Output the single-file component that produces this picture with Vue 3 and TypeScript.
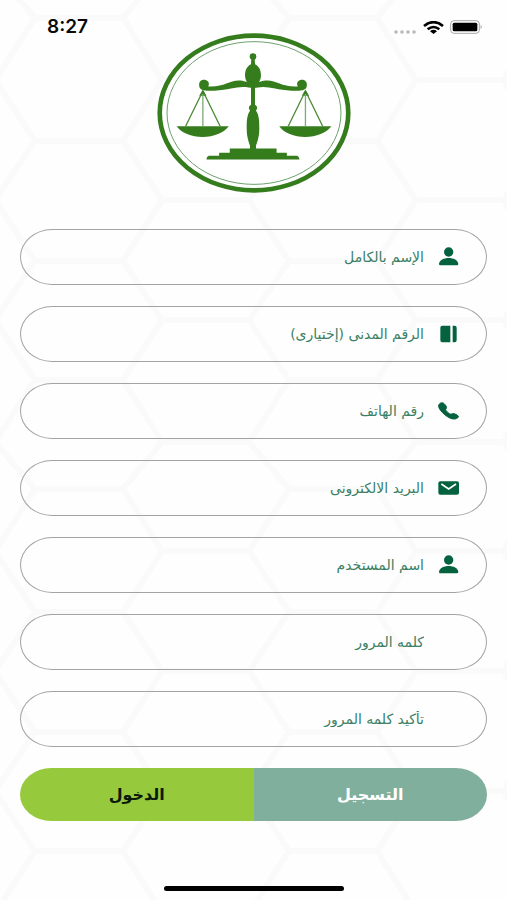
<script setup lang="ts">
import { ref } from 'vue'

type IconName = 'user' | 'card' | 'phone' | 'mail' | 'none'

interface Field {
  id: string
  type: string
  text: string
  icon: IconName
}

const fields: Field[] = [
  { id: 'full-name', type: 'text', text: 'الإسم بالكامل', icon: 'user' },
  { id: 'civil-id', type: 'text', text: 'الرقم المدنى (إختيارى)', icon: 'card' },
  { id: 'phone', type: 'tel', text: 'رقم الهاتف', icon: 'phone' },
  { id: 'email', type: 'email', text: 'البريد الالكترونى', icon: 'mail' },
  { id: 'username', type: 'text', text: 'اسم المستخدم', icon: 'user' },
  { id: 'password', type: 'password', text: 'كلمه المرور', icon: 'none' },
  { id: 'password-confirm', type: 'password', text: 'تأكيد كلمه المرور', icon: 'none' },
]

const values = ref<Record<string, string>>({})

// Honeycomb tile: flat edges of one column, and the corners halfway between them.
const edges = [0, 123, 243, 362, 471]
const corners = [62, 182, 302, 424]
const honeycomb = corners
  .map((mid, i) => `M0 ${mid} 40 ${edges[i]}H128L167 ${mid} 128 ${edges[i + 1]}H40ZM167 ${mid}H254`)
  .join('')
</script>

<template>
  <div class="page">
    <svg class="backdrop" aria-hidden="true">
      <defs>
        <pattern id="hex" x="-5" y="18" width="254" height="471" patternUnits="userSpaceOnUse">
          <path :d="honeycomb" />
        </pattern>
      </defs>
      <rect width="100%" height="100%" fill="url(#hex)" />
    </svg>

    <header class="status">
      <span class="time">8:27</span>
      <span class="indicators">
        <svg class="dots" viewBox="0 0 24 4" aria-hidden="true">
          <circle cx="3" cy="2" r="1.8" /><circle cx="9" cy="2" r="1.8" />
          <circle cx="15" cy="2" r="1.8" /><circle cx="21" cy="2" r="1.8" />
        </svg>
        <svg class="wifi" viewBox="0 0 63 39" aria-hidden="true">
          <path d="M3 15Q31.500 -8 60 15" />
          <path d="M14 25Q31.500 11 49 25" />
          <path class="solid" d="M31.500 39 21 30.500Q31.500 22 42 30.500Z" />
        </svg>
        <svg class="battery" viewBox="0 0 99 42" aria-hidden="true">
          <rect class="shell" x="2" y="2" width="86" height="38" rx="10" />
          <rect x="8" y="8" width="74" height="26" rx="5" />
          <path class="tip" d="M92 15Q98 21 92 27Z" />
        </svg>
      </span>
    </header>

    <main>
      <svg class="logo" viewBox="20 22 584 482" role="img" aria-label="ميزان">
        <ellipse class="ring" cx="312" cy="263" rx="284" ry="233" />
        <ellipse class="hairline" cx="312" cy="263" rx="262" ry="215" />
        <g class="ink">
          <circle cx="309" cy="93" r="10" />
          <path d="M304 98H314L315 116C328 122 333 135 333 150 333 162 328 171 320 175H298C290 171 285 162 285 150 285 135 290 122 303 116Z" />
          <path d="M309 171C330 171 335 165 352 165 382 165 398 186 444 183 438 172 446 163 457 163 469 163 474 174 470 186 468 195 445 197 425 196 385 194 362 185 340 185 325 185 320 188 309 188 298 188 293 185 278 185 256 185 233 194 193 196 173 197 150 195 148 186 144 174 149 163 161 163 172 163 180 172 174 183 220 186 236 165 266 165 283 165 288 171 309 171Z" />
          <path d="M303 184H315V238Q323 242 321 250L318 256C328 270 328 290 328 310 328 335 322 350 318 362V372H300V362C296 350 290 335 290 310 290 290 290 270 300 256L297 250Q295 242 303 238Z" />
          <path d="M239 370H380V383H411V392H442Q449 395 449 403H169Q168 395 176 392H207V383H239Z" />
          <path d="M79 303H236C222 323 190 335 157 335S92 323 79 303Z" />
          <path d="M388 303H545C531 323 499 335 466 335S401 323 388 303Z" />
          <path d="M158 192 169 211H147ZM467 192 478 211H456Z" />
        </g>
        <path class="cord" d="M154 205 106 303M162 205 210 303M463 205 415 303M471 205 519 303" />
        <path class="cord faint" d="M158 205V303M467 205V303" />
      </svg>

      <form dir="rtl" @submit.prevent>
        <label v-for="f in fields" :key="f.id" class="field" :for="f.id">
          <svg class="icon" viewBox="0 0 66 66" aria-hidden="true">
            <template v-if="f.icon === 'user'">
              <circle cx="32" cy="18" r="14" />
              <path d="M3 54C4 42 18 36 32 36S60 42 61 54Q61 58 57 58H7Q3 58 3 54Z" />
            </template>
            <path v-else-if="f.icon === 'card'" d="M13 8H37V58H13Q7 58 7 52V14Q7 8 13 8ZM44 8H50Q56 8 56 14V52Q56 58 50 58H44Z" />
            <path v-else-if="f.icon === 'phone'" class="handset" d="M5 11C11 6 17 8 21 14 26 20 27 23 23 28 22 32 34 42 39 43 44 39 50 41 57 45 62 48 63 51 58 54 50 60 38 57 24 47 8 35-4 19 5 11Z" />
            <g v-else-if="f.icon === 'mail'">
              <rect x="1" y="13" width="62" height="40" rx="6" />
              <path class="flap" d="M10 21 32 36 54 21" />
            </g>
          </svg>
          <input :id="f.id" v-model="values[f.id]" :type="f.type" :placeholder="f.text" :aria-label="f.text" />
        </label>

        <div class="actions">
          <button type="submit" class="register">التسجيل</button>
          <button type="button" class="login">الدخول</button>
        </div>
      </form>
    </main>

    <div class="home-bar"></div>
  </div>
</template>

<style>
body {
  margin: 0;
  background: #fefefe;
}
</style>

<style scoped>
.page {
  position: relative;
  isolation: isolate;
  box-sizing: border-box;
  min-height: 100vh;
  display: flex;
  flex-direction: column;
  font-family: "DejaVu Sans", "Noto Sans", sans-serif;
}
.backdrop {
  position: absolute;
  inset: 0;
  width: 100%;
  height: 100%;
  z-index: -1;
}
.backdrop path {
  fill: none;
  stroke: #fafafa;
  stroke-width: 6;
}
.status {
  display: flex;
  justify-content: space-between;
  align-items: center;
  height: 20px;
  padding: 17px 24px 0 47px;
}
.time {
  font: 600 19px/20px Inter, sans-serif;
  color: #0a0a0a;
}
.indicators {
  display: flex;
  align-items: center;
  gap: 6px;
}
.dots {
  width: 24px;
  height: 4px;
  fill: #b9b9b9;
  align-self: flex-end;
}
.wifi {
  width: 21px;
  height: 13px;
  fill: none;
  stroke: #000;
  stroke-width: 8;
}
.wifi .solid {
  fill: #000;
  stroke: none;
}
.battery {
  width: 33px;
  height: 14px;
}
.battery .shell {
  fill: none;
  stroke: #a9a9a9;
  stroke-width: 3;
}
.battery .tip {
  fill: #8d8d8d;
}
main {
  padding: 0 20px;
}
.logo {
  display: block;
  width: 194px;
  height: 160px;
  margin: -4px auto 36px;
}
.ring {
  fill: #fff;
  stroke: #347c1c;
  stroke-width: 14;
}
.hairline {
  fill: none;
  stroke: #6da06c;
  stroke-width: 3;
}
.ink {
  fill: #347c1c;
}
.cord {
  fill: none;
  stroke: #4b8b38;
  stroke-width: 4;
}
.faint {
  stroke: #7fab78;
}
form {
  display: flex;
  flex-direction: column;
  gap: 21px;
}
.field {
  box-sizing: border-box;
  height: 56px;
  display: flex;
  align-items: center;
  gap: 14px;
  padding: 0 26px;
  border: 1px solid #a3a3a3;
  border-radius: 32px / 28px;
}
.icon {
  flex: none;
  width: 22px;
  height: 22px;
  fill: #04623f;
}
.handset {
  stroke: #04623f;
  stroke-width: 3;
}
.flap {
  fill: none;
  stroke: #fff;
  stroke-width: 5;
}
input {
  flex: 1;
  min-width: 0;
  height: 32px;
  padding: 0;
  border: 0;
  outline: 0;
  background: transparent;
  direction: rtl;
  font: 14px/20px "DejaVu Sans", "Noto Sans", sans-serif;
  color: #04623f;
}
input::placeholder {
  color: #3b8064;
  opacity: 1;
}
.actions {
  display: flex;
  height: 53px;
  border-radius: 32px / 27px;
  overflow: hidden;
}
button {
  flex: 1;
  border: 0;
  padding: 0;
  font: bold 16px/20px "DejaVu Sans", "Noto Sans", sans-serif;
}
.register {
  background: #80af9e;
  color: #fff;
}
.login {
  background: #97c93c;
  color: #0b1a08;
}
.home-bar {
  width: 180px;
  height: 5px;
  margin: auto auto 9px;
  border-radius: 3px;
  background: #000;
}
</style>
